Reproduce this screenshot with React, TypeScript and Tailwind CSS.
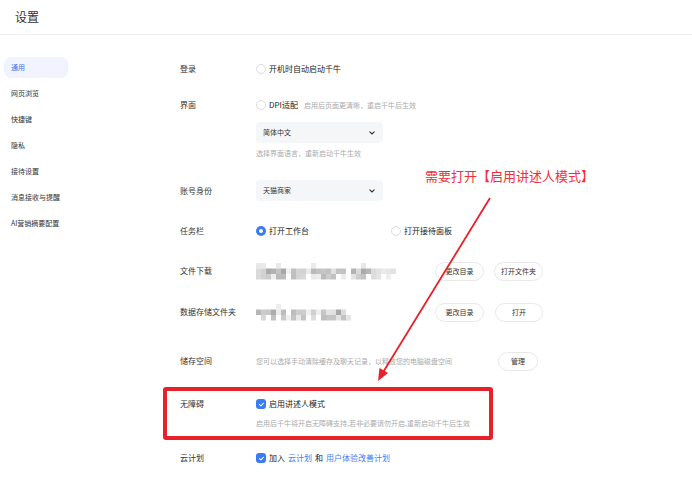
import React from 'react';

const menu = ['通用', '网页浏览', '快捷键', '隐私', '接待设置', '消息接收与提醒', 'AI营销摘要配置'];

// Pixelated placeholder for a masked path
const Mosaic: React.FC<{ cols: number; seed: number }> = ({ cols, seed }) => {
    const cells: React.ReactNode[] = [];
    let s = seed;
    const rnd = () => {
        s = (s * 9301 + 49297) % 233280;
        return s / 233280;
    };
    for (let r = 0; r < 3; r++) {
        for (let c = 0; c < cols; c++) {
            const v = rnd();
            if (r === 0 && v < 0.85) continue;
            if (r === 2 && v < 0.25) continue;
            if (c % 12 === 6 && v < 0.7) continue;
            const g = Math.round(165 + v * 75);
            cells.push(<rect key={`${r}-${c}`} x={c * 5} y={r * 5.5} width={5} height={5.5} fill={`rgb(${g},${g},${g})`} />);
        }
    }
    return (
        <svg width={cols * 5} height={17} viewBox={`0 0 ${cols * 5} 17`}>
            {cells}
        </svg>
    );
};

const Circle = () => <span className="w-[10px] h-[10px] rounded-full border border-[#dcdcdc] bg-white shrink-0" />;

const Checked = () => (
    <span className="w-[10px] h-[10px] rounded-[3px] bg-[#3b7bf6] shrink-0 flex items-center justify-center">
        <svg width="7" height="7" viewBox="0 0 10 10">
            <path d="M2.2 5.2 L4.2 7 L7.8 3.2" fill="none" stroke="#fff" strokeWidth="1.5" strokeLinecap="round" strokeLinejoin="round" />
        </svg>
    </span>
);

const Radio = () => (
    <span className="w-[10px] h-[10px] rounded-full bg-[#3b7bf6] shrink-0 flex items-center justify-center">
        <span className="w-[4px] h-[4px] rounded-full bg-white" />
    </span>
);

const Pill: React.FC<{ children: React.ReactNode; w: string }> = ({ children, w }) => (
    <span className={`${w} h-[19px] rounded-full border border-[#e8e8e8] flex items-center justify-center text-[7px] text-[#333]`}>{children}</span>
);

const Select: React.FC<{ value: string }> = ({ value }) => (
    <div className="w-[127px] h-[21px] rounded-[4px] bg-[#f5f6f8] flex items-center justify-between pl-[7px] pr-[8px] text-[7px] text-[#333]">
        <span>{value}</span>
        <svg width="6" height="4" viewBox="0 0 6 4">
            <path d="M0.8 0.8 L3 3 L5.2 0.8" fill="none" stroke="#333" strokeWidth="1.1" strokeLinecap="round" />
        </svg>
    </div>
);

const Row: React.FC<{ label: string; className?: string; children?: React.ReactNode }> = ({ label, className = '', children }) => (
    <div className={`flex items-center h-[20px] ${className}`}>
        <span className="w-[76px] text-[8px] text-[#333]">{label}</span>
        <div className="flex items-center">{children}</div>
    </div>
);

export default function App() {
    return (
        <div className="relative w-[692px] h-[496px] overflow-hidden bg-white" style={{ fontFamily: '"Noto Sans CJK SC", "Noto Sans", sans-serif' }}>
            <div className="h-[35px] border-b border-[#eeeeee] px-[15px] flex items-center text-[12px] text-[#333]">设置</div>

            <div className="flex">
                <div className="w-[72px] pt-[22px] px-[4px] flex flex-col gap-[5px]">
                    {menu.map((m, i) => (
                        <div key={m} className={`h-[21px] rounded-[7px] pl-[7px] flex items-center text-[7px] ${i === 0 ? 'bg-[#f1f4ff] text-[#4a72f0]' : 'text-[#333]'}`}>{m}</div>
                    ))}
                </div>

                <div className="pl-[108px] flex flex-col">
                    <Row label="登录" className="mt-[24px]">
                        <Circle />
                        <span className="ml-[3px] text-[8px] text-[#222]">开机时自动启动千牛</span>
                    </Row>

                    <Row label="界面" className="mt-[16px]">
                        <Circle />
                        <span className="ml-[3px] text-[8px] text-[#222]">DPI适配</span>
                        <span className="ml-[6px] text-[7px] text-[#aaa]">启用后页面更清晰，重启千牛后生效</span>
                    </Row>
                    <div className="pl-[76px] mt-[7px]">
                        <Select value="简体中文" />
                    </div>
                    <div className="pl-[76px] mt-[5px] h-[10px] flex items-center text-[7px] text-[#aaa]">选择界面语言，重新启动千牛生效</div>

                    <div className="flex items-center h-[21px] mt-[22px]">
                        <span className="w-[76px] text-[8px] text-[#333]">账号身份</span>
                        <Select value="天猫商家" />
                    </div>

                    <Row label="任务栏" className="mt-[20px]">
                        <span className="w-[135px] flex items-center">
                            <Radio />
                            <span className="ml-[3px] text-[8px] text-[#222]">打开工作台</span>
                        </span>
                        <Circle />
                        <span className="ml-[3px] text-[8px] text-[#222]">打开接待面板</span>
                    </Row>

                    <Row label="文件下载" className="mt-[20px]">
                        <div className="w-[287px] flex items-center">
                            <Mosaic cols={28} seed={17} />
                            <span className="ml-auto flex gap-[10px]">
                                <Pill w="w-[49px]">更改目录</Pill>
                                <Pill w="w-[49px]">打开文件夹</Pill>
                            </span>
                        </div>
                    </Row>

                    <Row label="数据存储文件夹" className="mt-[21px]">
                        <div className="w-[287px] flex items-center">
                            <Mosaic cols={19} seed={53} />
                            <span className="ml-auto flex gap-[11px]">
                                <Pill w="w-[49px]">更改目录</Pill>
                                <Pill w="w-[48px]">打开</Pill>
                            </span>
                        </div>
                    </Row>

                    <Row label="储存空间" className="mt-[29px]">
                        <div className="w-[287px] flex items-center">
                            <span className="text-[7px] text-[#aaa]">您可以选择手动清除缓存及聊天记录，以释放您的电脑磁盘空间</span>
                            <span className="ml-auto mr-[5px] flex">
                                <Pill w="w-[40px]">管理</Pill>
                            </span>
                        </div>
                    </Row>

                    <Row label="无障碍" className="mt-[23px]">
                        <Checked />
                        <span className="ml-[3px] text-[8px] text-[#222]">启用讲述人模式</span>
                    </Row>
                    <div className="pl-[76px] mt-[4px] h-[10px] flex items-center text-[7px] text-[#aaa]">启用后千牛将开启无障碍支持,若非必要请勿开启,重新启动千牛后生效</div>

                    <Row label="云计划" className="mt-[20px]">
                        <Checked />
                        <span className="ml-[3px] text-[8px] text-[#222]">加入</span>
                        <span className="ml-[3px] text-[8px] text-[#3f7ef5]">云计划</span>
                        <span className="ml-[3px] text-[8px] text-[#222]">和</span>
                        <span className="ml-[3px] text-[8px] text-[#3f7ef5]">用户体验改善计划</span>
                    </Row>
                </div>
            </div>

            {/* annotation layer */}
            <div className="absolute left-[163px] top-[387px] w-[330px] h-[53px] border-[4px] border-[#e8202a] rounded-[3px]" />
            <div className="absolute left-[425px] top-[167px] text-[13px] leading-[18px] text-[#f0313a]">需要打开【启用讲述人模式】</div>
            <svg className="absolute left-0 top-0" width="692" height="496" viewBox="0 0 692 496">
                <line x1="490" y1="198" x2="382" y2="374" stroke="#e8202a" strokeWidth="1.8" />
                <polygon points="378,381 379.5,368 388,373" fill="#e8202a" />
            </svg>
        </div>
    );
}
